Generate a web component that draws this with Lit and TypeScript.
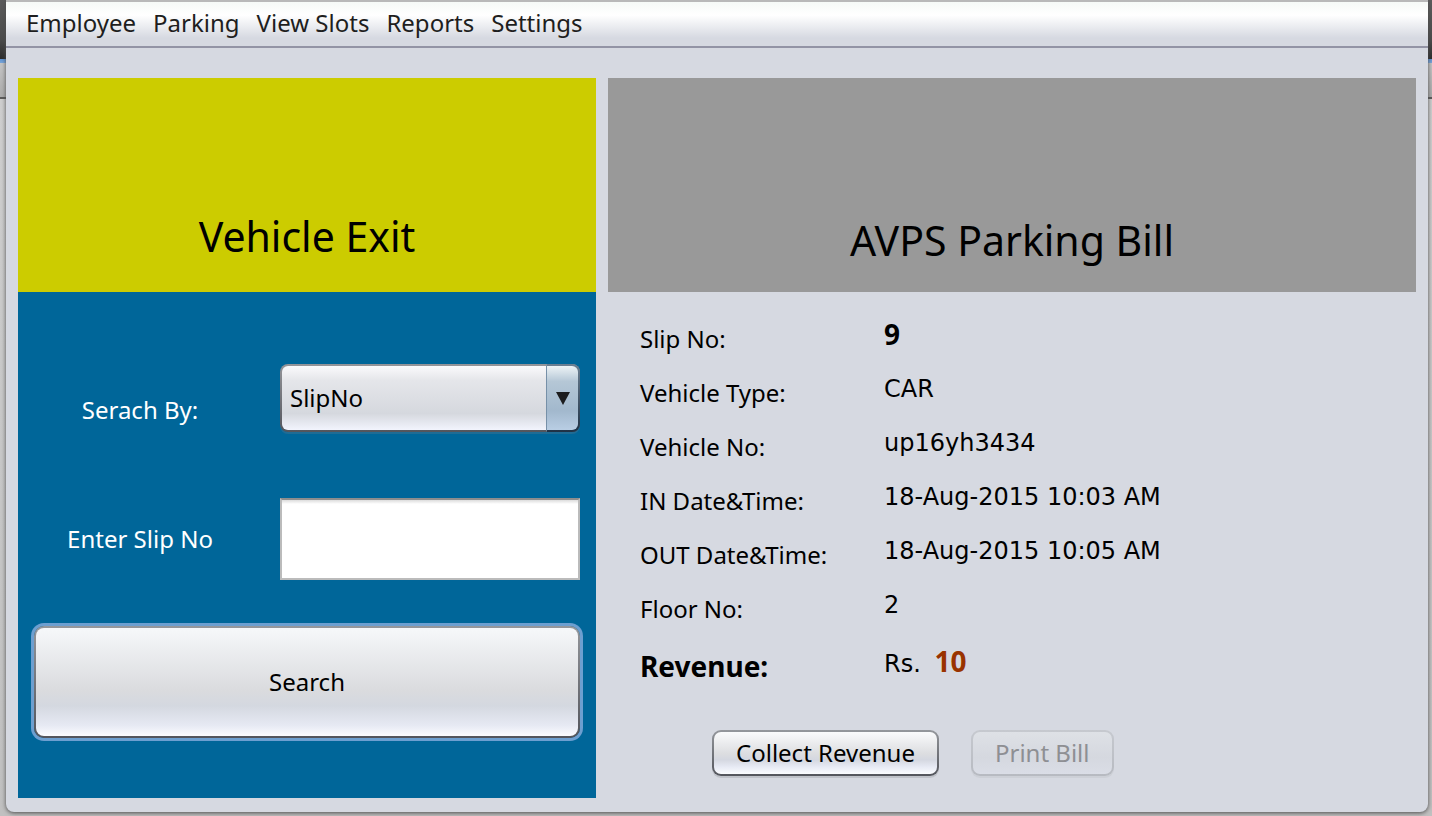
import { LitElement, html, css } from "lit";
import { customElement, state } from "lit/decorators.js";

const MENUS = ["Employee", "Parking", "View Slots", "Reports", "Settings"];

@customElement("menu-bar")
class MenuBar extends LitElement {
  static styles = css`
    :host {
      display: block;
    }
    .bar {
      display: flex;
      align-items: center;
      flex-wrap: wrap;
      gap: 17px;
      box-sizing: border-box;
      min-height: 48px;
      padding: 0 20px 2px;
      border-top: 2px solid #b9b9b9;
      border-bottom: 2px solid #9394a5;
      background: linear-gradient(#f6faf7 0, #ffffff 30%, #d6d9e1 82%, #d6d9e1 100%);
    }
    .item {
      padding: 0;
      border: 0;
      background: none;
      color: #1e1e20;
      font: 24px/32px "Noto Sans", "Open Sans", sans-serif;
      white-space: nowrap;
    }
  `;
  render() {
    return html`<nav class="bar">
      ${MENUS.map((m) => html`<button class="item" type="button">${m}</button>`)}
    </nav>`;
  }
}

@customElement("exit-panel")
class ExitPanel extends LitElement {
  @state() private slip = "";

  static styles = css`
    :host {
      display: flex;
      flex-direction: column;
    }
    .head {
      display: flex;
      align-items: flex-end;
      justify-content: center;
      box-sizing: border-box;
      height: 214px;
      padding-bottom: 28px;
      background: #cccc00;
    }
    .title {
      margin: 0;
      font-size: 41px;
      line-height: 56px;
      font-weight: 400;
    }
    .form {
      flex: 1;
      display: grid;
      grid-template-columns: 244px minmax(0, 1fr);
      grid-template-rows: 92px 82px auto;
      align-content: start;
      row-gap: 42px;
      padding: 72px 16px 56px 0;
      background: #006699;
    }
    .label {
      align-self: center;
      text-align: center;
      color: #ffffff;
    }
    .combo {
      position: relative;
      margin-left: 18px;
      height: 68px;
    }
    .select,
    .text,
    .search {
      box-sizing: border-box;
      width: 100%;
      color: #000000;
      font: 24px/32px "Noto Sans", "Open Sans", sans-serif;
      outline: none;
    }
    .select {
      appearance: none;
      height: 68px;
      padding: 0 40px 0 8px;
      border: 2px solid transparent;
      border-radius: 8px;
      background:
        linear-gradient(#fafafc 0, #e5e6ea 22%, #d5d8de 74%, #f2f4fd 100%) padding-box,
        linear-gradient(#94959a, #53555c) border-box;
      box-shadow: 0 2px 0 #1f6c95;
    }
    .drop {
      position: absolute;
      top: 0;
      right: 0;
      box-sizing: border-box;
      display: flex;
      align-items: center;
      justify-content: center;
      width: 34px;
      height: 68px;
      border: 2px solid transparent;
      border-left: 1px solid #7690a8;
      border-radius: 0 8px 8px 0;
      background:
        linear-gradient(#edf3f6 0, #b5c7d6 24%, #a2b8cd 70%, #b9cee4 100%) padding-box,
        linear-gradient(#6b7f92, #1f3246) border-box;
      pointer-events: none;
    }
    .text {
      margin-left: 18px;
      width: calc(100% - 18px);
      height: 82px;
      padding: 0 8px;
      border: 2px solid #bbbbbb;
      border-top-color: #8d8d8d;
      border-radius: 0;
      background: linear-gradient(#dcdcdc, #ffffff 4px);
    }
    .search {
      grid-column: 1 / -1;
      width: auto;
      height: 112px;
      margin: 4px 0 0 16px;
      border: 2px solid transparent;
      border-radius: 10px;
      background:
        linear-gradient(#f6f8fa 0, #dadbde 58%, #d4d8e0 72%, #e6e9f3 90%, #fbfcff 100%) padding-box,
        linear-gradient(#94979c, #53555c) border-box;
      box-shadow: 0 0 0 3px #6d9fd0;
    }
  `;
  render() {
    return html`
      <header class="head"><h1 class="title">Vehicle Exit</h1></header>
      <form class="form" @submit=${(e: Event) => e.preventDefault()}>
        <label class="label" for="by">Serach By:</label>
        <div class="combo">
          <select class="select" id="by">
            <option>SlipNo</option>
          </select>
          <span class="drop">
            <svg width="14" height="13" viewBox="0 0 14 13" aria-hidden="true">
              <path d="M0 0H14L7 13Z" fill="#1c1c1e" />
            </svg>
          </span>
        </div>
        <label class="label" for="slip">Enter Slip No</label>
        <input
          class="text"
          id="slip"
          type="text"
          .value=${this.slip}
          @input=${(e: Event) => (this.slip = (e.target as HTMLInputElement).value)}
        />
        <button class="search" type="submit">Search</button>
      </form>
    `;
  }
}

const BILL = [
  { label: "Slip No:", value: html`<b class="strong">9</b>` },
  { label: "Vehicle Type:", value: "CAR" },
  { label: "Vehicle No:", value: "up16yh3434" },
  { label: "IN Date&Time:", value: "18-Aug-2015 10:03 AM" },
  { label: "OUT Date&Time:", value: "18-Aug-2015 10:05 AM" },
  { label: "Floor No:", value: "2" },
];

@customElement("bill-panel")
class BillPanel extends LitElement {
  static styles = css`
    :host {
      display: block;
    }
    .head {
      display: flex;
      align-items: flex-end;
      justify-content: center;
      box-sizing: border-box;
      height: 214px;
      padding-bottom: 24px;
      background: #999999;
    }
    .title {
      margin: 0;
      font-size: 41px;
      line-height: 56px;
      font-weight: 400;
    }
    .bill {
      display: grid;
      grid-template-columns: 244px minmax(0, 1fr);
      grid-template-rows: repeat(6, 54px) 60px;
      align-items: center;
      margin: 0;
      padding: 20px 0 0 32px;
    }
    .value {
      margin: 0;
      padding-bottom: 8px;
      font-family: "DejaVu Sans", "Noto Sans", sans-serif;
    }
    .strong,
    .amount {
      font-family: "Noto Sans", "Open Sans", sans-serif;
      font-size: 28px;
      font-weight: 700;
    }
    .amount {
      margin-left: 6px;
      color: #993300;
    }
    .actions {
      display: flex;
      gap: 32px;
      padding: 34px 0 0 104px;
    }
    .btn {
      box-sizing: border-box;
      height: 46px;
      padding: 0 22px;
      border: 2px solid transparent;
      border-radius: 9px;
      color: #000000;
      font: 24px/32px "Noto Sans", "Open Sans", sans-serif;
      background:
        linear-gradient(#fafbfc 0, #dcdde0 52%, #d4d7e0 66%, #e8ebf5 84%, #fbfcff 100%) padding-box,
        linear-gradient(#94979c, #53555c) border-box;
      box-shadow: 0 2px 0 #bfc2c9;
    }
    .btn:disabled {
      color: #8e8f93;
      background:
        linear-gradient(#dee1e6, #d5d8df 60%, #dadde6) padding-box,
        linear-gradient(#c6c9cf, #b7bac1) border-box;
      box-shadow: 0 2px 0 #cdd0d7;
    }
  `;
  render() {
    return html`
      <header class="head"><h2 class="title">AVPS Parking Bill</h2></header>
      <dl class="bill">
        ${BILL.map((r) => html`<dt>${r.label}</dt>
            <dd class="value">${r.value}</dd>`)}
        <dt class="strong">Revenue:</dt>
        <dd class="value">Rs. <span class="amount">10</span></dd>
      </dl>
      <div class="actions">
        <button class="btn" type="button">Collect Revenue</button>
        <button class="btn" type="button" disabled>Print Bill</button>
      </div>
    `;
  }
}

@customElement("app-root")
class AppRoot extends LitElement {
  static styles = css`
    :host {
      display: flex;
      flex-direction: column;
      box-sizing: border-box;
      min-height: 100vh;
      padding: 0 4px 4px 6px;
      background: linear-gradient(
        #5c5c5c 0,
        #4a4a4a 40px,
        #2c2c2c 59px,
        #5f93d2 59px,
        #79a5d8 63px,
        #c4c4c4 63px,
        #ababab 97px,
        #5a5a5a 97px,
        #5a5a5a 99px,
        #cecece 99px,
        #c0c0c0 100%
      );
      color: #000000;
      font: 24px/32px "Noto Sans", "Open Sans", sans-serif;
    }
    .window {
      flex: 1;
      display: flex;
      flex-direction: column;
      border-radius: 0 0 8px 8px;
      background: #d6d9e1;
      box-shadow: 0 1px 4px #4c4c4c;
    }
    .content {
      flex: 1;
      display: grid;
      grid-template-columns: minmax(0, 289fr) minmax(0, 404fr);
      gap: 12px;
      padding: 30px 12px 14px;
    }
  `;
  render() {
    return html`<div class="window">
      <menu-bar></menu-bar>
      <main class="content">
        <exit-panel></exit-panel>
        <bill-panel></bill-panel>
      </main>
    </div>`;
  }
}
